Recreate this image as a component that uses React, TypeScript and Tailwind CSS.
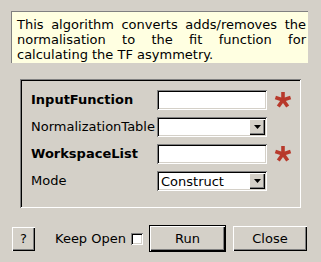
import React from "react";

const sunken =
  "shadow-[inset_1px_1px_0_#808080,inset_-1px_-1px_0_#ffffff,inset_2px_2px_0_#000000,inset_-2px_-2px_0_#d4d0c8]";
const raised =
  "shadow-[inset_1px_1px_0_#ffffff,inset_-1px_-1px_0_#000000,inset_-2px_-2px_0_#808080]";

function Star() {
  return (
    <svg width="18" height="18" viewBox="-9 -9 18 18" className="ml-[7px]">
      {[0, 72, 144, 216, 288].map((a) => (
        <line
          key={a}
          x1="0"
          y1="0"
          x2={8 * Math.sin((a * Math.PI) / 180)}
          y2={-8 * Math.cos((a * Math.PI) / 180)}
          stroke="#b8392b"
          strokeWidth="3.6"
        />
      ))}
    </svg>
  );
}

function TextField() {
  return <div className={`h-[20px] w-[110px] bg-white ${sunken}`} />;
}

function Combo({ value }: { value?: string }) {
  return (
    <div className={`flex h-[20px] w-[110px] items-center bg-white p-[2px] ${sunken}`}>
      <span className="flex-1 pl-[2px] text-[13px] leading-none text-black">{value}</span>
      <span className={`flex h-[16px] w-[16px] items-center justify-center bg-[#d4d0c8] ${raised}`}>
        <svg width="7" height="4" viewBox="0 0 7 4">
          <path d="M0 0h7L3.5 4z" fill="#000" />
        </svg>
      </span>
    </div>
  );
}

function Row({ label, bold, children }: { label: string; bold?: boolean; children: React.ReactNode }) {
  return (
    <div className="flex h-[20px] items-center">
      <span className={`w-[126px] text-[13px] text-black ${bold ? "font-bold" : ""}`}>{label}</span>
      {children}
    </div>
  );
}

export default function App() {
  return (
    <div
      className="flex h-[262px] w-[321px] flex-col bg-[#d4d0c8]"
      style={{ fontFamily: '"DejaVu Sans", sans-serif' }}
    >
      <div className="ml-[11px] mt-[11px] h-[52px] w-[297px] border-l border-t border-[#808080] bg-[#ffffe1] pl-[5px] pr-[2px] pt-[5px] text-justify text-[13px] leading-[15px] text-black">
        This algorithm converts adds/removes the normalisation to the fit function for calculating the TF asymmetry.
      </div>

      <div className={`ml-[20px] mt-[16px] flex h-[129px] w-[281px] flex-col gap-[7px] pl-[11px] pt-[11px] ${sunken}`}>
        <Row label="InputFunction" bold>
          <TextField />
          <Star />
        </Row>
        <Row label="NormalizationTable">
          <Combo />
        </Row>
        <Row label="WorkspaceList" bold>
          <TextField />
          <Star />
        </Row>
        <Row label="Mode">
          <Combo value="Construct" />
        </Row>
      </div>

      <div className="ml-[12px] mt-[17px] flex items-center text-[13px] text-black">
        <button className={`h-[24px] w-[23px] bg-[#d4d0c8] text-[13px] ${raised}`}>?</button>
        <span className="ml-[20px]">Keep Open</span>
        <span className={`ml-[5px] h-[12px] w-[12px] bg-white ${sunken}`} />
        <button className="ml-[6px] h-[27px] w-[77px] border border-black bg-[#d4d0c8]">
          <span className={`flex h-full w-full items-center justify-center ${raised}`}>Run</span>
        </button>
        <button className={`ml-[7px] h-[25px] w-[74px] bg-[#d4d0c8] ${raised}`}>Close</button>
      </div>
    </div>
  );
}
